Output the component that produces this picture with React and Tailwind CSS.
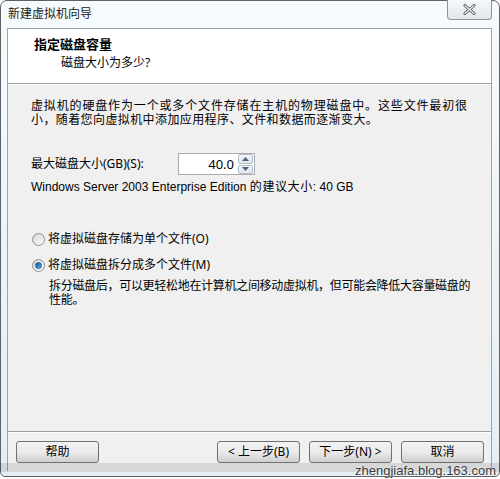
const font = { fontFamily: '"Noto Sans", "Noto Sans CJK SC", sans-serif' }
const latin = { fontFamily: '"Liberation Sans", "Noto Sans CJK SC", sans-serif' }

function Radio({ checked }) {
  return (
    <span className="w-[13px] h-[13px] rounded-full border border-[#8e8f8f] bg-gradient-to-br from-[#d4d4d4] to-[#fbfbfb] flex items-center justify-center shrink-0">
      {checked && (
        <span className="w-[7px] h-[7px] rounded-full bg-gradient-to-br from-[#0a4f86] to-[#5fb5ee] border border-[#1b5f99]" />
      )}
    </span>
  )
}

function Button({ children, className }) {
  return (
    <button className={'h-[22px] w-[83px] rounded-[3px] border border-[#707070] bg-gradient-to-b from-[#f2f2f2] via-[#ebebeb] to-[#cfcfcf] text-[12px] text-black flex items-center justify-center ' + (className || '')}>
      {children}
    </button>
  )
}

function SpinHalf({ up }) {
  return (
    <div className="flex-1 rounded-[2px] border border-[#b4bcc6] bg-gradient-to-b from-[#f3f6f9] to-[#dfe6ee] flex items-center justify-center">
      <svg width="7" height="4" viewBox="0 0 7 4">
        <path d={up ? 'M0 4 L3.5 0 L7 4 Z' : 'M0 0 L3.5 4 L7 0 Z'} fill="#4d6185" />
      </svg>
    </div>
  )
}

export default function App() {
  return (
    <div className="w-[500px] h-[479px] bg-white relative overflow-hidden text-black" style={font}>
      {/* Window frame */}
      <div className="h-[477px] w-[500px] flex flex-col border border-[#5e6266] rounded-t-[7px] rounded-b-[5px] bg-gradient-to-b from-[#f6fbfd] to-[#e4eef5]">
        {/* Title bar */}
        <div className="h-[27px] flex items-start justify-between shrink-0">
          <span className="pl-[7px] pt-[6px] text-[12px] leading-[14px] text-[#1a1a1a]">新建虚拟机向导</span>
          <div className="mr-[7px] -mt-[1px] w-[45px] h-[20px] rounded-b-[4px] border border-[#8c9399] border-t-0 bg-gradient-to-b from-[#f7f9fb] to-[#e1e6ea] flex items-center justify-center">
            <svg width="13" height="11" viewBox="0 0 13 11">
              <path d="M2 1.5 L11 9.5 M11 1.5 L2 9.5" stroke="#4c5257" strokeWidth="3" strokeLinecap="round" />
              <path d="M2 1.5 L11 9.5 M11 1.5 L2 9.5" stroke="#f4f5f6" strokeWidth="1.2" strokeLinecap="round" />
            </svg>
          </div>
        </div>

        {/* Client area */}
        <div className="flex-1 ml-[6px] mr-[7px] border border-[#9aa4ab] border-b-0 flex flex-col bg-[#f0f0f0]">
          {/* Header */}
          <div className="h-[55px] bg-white border-b border-[#a0a0a0] shrink-0 pt-[7px] pl-[26px]">
            <div className="text-[13px] leading-[16px] font-bold">指定磁盘容量</div>
            <div className="pl-[27px] mt-[3px] text-[12px] leading-[16px]">磁盘大小为多少?</div>
          </div>
          <div className="h-px bg-white shrink-0" />

          {/* Body */}
          <div className="flex-1 pl-[23px] pt-[14px] text-[12px] leading-[14px]">
            <div className="whitespace-nowrap tracking-[0.85px]">虚拟机的硬盘作为一个或多个文件存储在主机的物理磁盘中。这些文件最初很</div>
            <div className="whitespace-nowrap tracking-[0.4px]">小，随着您向虚拟机中添加应用程序、文件和数据而逐渐变大。</div>

            <div className="mt-[26px] flex items-center">
              <span className="w-[147px]">最大磁盘大小(GB)(S):</span>
              <div className="h-[22px] w-[77px] bg-white border border-[#abadb3] flex items-center justify-end">
                <span className="text-[13px] pr-[4px]">40.0</span>
                <div className="w-[15px] h-[20px] flex flex-col gap-px mr-px">
                  <SpinHalf up />
                  <SpinHalf />
                </div>
              </div>
            </div>
            <div className="mt-[5px] whitespace-nowrap" style={latin}>
              Windows Server 2003 Enterprise Edition <span className="tracking-[0.6px]">的建议大小</span>: 40 GB
            </div>

            <div className="mt-[38px] flex items-center gap-[3px] pl-px">
              <Radio />
              <span>将虚拟磁盘存储为单个文件(O)</span>
            </div>
            <div className="mt-[12px] flex items-center gap-[3px] pl-px">
              <Radio checked />
              <span>将虚拟磁盘拆分成多个文件(M)</span>
            </div>
            <div className="mt-[7px] pl-[18px] whitespace-nowrap tracking-[-0.3px]">
              拆分磁盘后，可以更轻松地在计算机之间移动虚拟机，但可能会降低大容量磁盘的
              <br />
              性能。
            </div>
          </div>

          {/* Footer */}
          <div className="h-[40px] border-t border-[#a0a0a0] shrink-0">
            <div className="border-t border-white h-full flex items-start pt-[8px] pl-[8px] pr-[7px]">
              <Button>帮助</Button>
              <div className="flex-1" />
              <Button>&lt; 上一步(B)</Button>
              <Button className="ml-[9px]">下一步(N) &gt;</Button>
              <Button className="ml-[9px]">取消</Button>
            </div>
          </div>
        </div>
        <div className="h-[5px] shrink-0" />
      </div>

      {/* Watermark strip */}
      <div className="absolute left-0 right-0 top-[463px] h-[9px] bg-black/10" />
      <div className="absolute right-[4px] top-[463px] text-[13px] leading-[15px] text-[#3a3a3a]" style={{ fontFamily: '"Liberation Sans", sans-serif', textShadow: '0 0 2px #fff' }}>
        zhengjiafa.blog.163.com
      </div>
    </div>
  )
}
